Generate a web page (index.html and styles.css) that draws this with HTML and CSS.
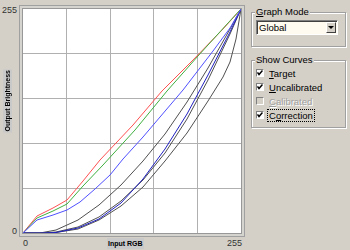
FILE: index.html
```html
<!DOCTYPE html>
<html lang="en">
  <head>
    <meta charset="UTF-8" />
    <title>Graph Mode</title>
    <link rel="stylesheet" href="styles.css">
  </head>

  <body>
    <div class="window">
      <!-- 曲线图 -->
      <div class="chart">
        <div class="y-axis">
          <span class="tick">255</span>
          <span class="axis-title vertical">Output Brightness</span>
          <span class="tick tick-zero">0</span>
        </div>
        <div class="plot-frame">
          <svg class="plot" width="218" height="224" viewBox="0 0 218 224">
            <g class="grid">
              <line x1="43.5" y1="0" x2="43.5" y2="224" />
              <line x1="87.5" y1="0" x2="87.5" y2="224" />
              <line x1="130.5" y1="0" x2="130.5" y2="224" />
              <line x1="174.5" y1="0" x2="174.5" y2="224" />
              <line x1="0" y1="44.5" x2="218" y2="44.5" />
              <line x1="0" y1="89.5" x2="218" y2="89.5" />
              <line x1="0" y1="134.5" x2="218" y2="134.5" />
              <line x1="0" y1="179.5" x2="218" y2="179.5" />
            </g>
            <!-- correction -->
            <polyline class="curve gray" points="0,224 17,224 33,221 55,211 76,196 98,176 120,152 142,125 164,93 185,59 207,20 218,0" />
            <polyline class="curve gray" points="0,224 17,224 33,223 55,218 76,208 98,192 120,171 142,144 164,110 185,71 207,25 218,0" />
            <polyline class="curve gray" points="0,224 17,224 33,223.5 55,220 76,211 98,197 120,178 142,152 164,124 185,92 200,68 207,53 213,30 218,0" />
            <polyline class="curve dark-blue" points="0,224 17,224 33,223.5 55,219 76,210 98,194 120,170 142,140 164,105 185,66 207,23 218,0" />
            <!-- target / uncalibrated -->
            <polyline class="curve red" points="0,224 14,207 30,199 44,191 60,172 77,151 110,116 139,82 170,51 200,20 218,0" />
            <polyline class="curve green" points="0,224 14,209 30,202 44,195 60,177 80,156 112,121 144,82 175,47 205,14 218,0" />
            <polyline class="curve blue" points="0,224 14,211 30,206 44,201 57,193 72,180 87,166 100,150 120,128 160,81 190,42 207,19 218,0" />
          </svg>
        </div>
        <div class="x-axis">
          <span class="tick tick-first">0</span>
          <span class="axis-title">Input RGB</span>
          <span class="tick tick-last">255</span>
        </div>
      </div>

      <!-- 右侧选项 -->
      <div class="side">
        <fieldset class="group">
          <legend><u>G</u>raph Mode</legend>
          <div class="select">
            <span class="select-text">Global</span>
            <span class="select-btn"></span>
          </div>
        </fieldset>

        <fieldset class="group curves">
          <legend>Show Curves</legend>
          <label class="check">
            <span class="box"><svg width="6" height="6" viewBox="0 0 6 6"><path d="M0.5 2.5 L2 4.5 L5.5 0.5" /></svg></span>
            <span><u>T</u>arget</span>
          </label>
          <label class="check">
            <span class="box"><svg width="6" height="6" viewBox="0 0 6 6"><path d="M0.5 2.5 L2 4.5 L5.5 0.5" /></svg></span>
            <span><u>U</u>ncalibrated</span>
          </label>
          <label class="check disabled">
            <span class="box"></span>
            <span><u>C</u>alibrated</span>
          </label>
          <label class="check">
            <span class="box"><svg width="6" height="6" viewBox="0 0 6 6"><path d="M0.5 2.5 L2 4.5 L5.5 0.5" /></svg></span>
            <span class="focus">C<u>o</u>rrection</span>
          </label>
        </fieldset>
      </div>
    </div>
  </body>
</html>
```

FILE: styles.css
```css
body {
  margin: 0;
  padding: 0;
  background: #d4d0c8;
  font-family: "Liberation Sans", Arial, sans-serif;
  font-size: 9.5px;
  color: #000;
}

.window {
  display: flex;
  width: 350px;
  height: 250px;
  overflow: hidden;
}

/* chart */
.chart {
  display: grid;
  grid-template-columns: 19px 226px;
  grid-template-rows: 232px 13px;
  padding-top: 5px;
}

.tick {
  font-size: 9px;
  line-height: 11px;
  color: #333;
}

.axis-title {
  font-size: 7px;
  font-weight: bold;
  line-height: 9px;
  white-space: nowrap;
  background: #c9c9c9;
  padding: 1px;
}

.y-axis {
  display: flex;
  flex-direction: column;
  align-items: flex-end;
  padding-right: 2px;
}

.y-axis .vertical {
  align-self: flex-start;
  margin: 53px 0 0 3px;
  padding: 1px 0;
  writing-mode: vertical-rl;
  transform: rotate(180deg);
}

.tick-zero {
  margin-top: auto;
}

.plot-frame {
  border: 1px solid #a0a0a0;
  padding: 2px;
  background: #d6d4cf;
}

.plot {
  display: block;
  border: 1px solid #989898;
  background: #fff;
}

.grid line {
  stroke: #b0b0b0;
  stroke-width: 1;
}

.curve {
  fill: none;
  stroke-width: 1;
  stroke-linejoin: round;
}

.red {
  stroke: #ff5050;
}

.green {
  stroke: #40b040;
}

.blue {
  stroke: #5050ff;
}

.dark-blue {
  stroke: #2020c0;
}

.gray {
  stroke: #505050;
}

.x-axis {
  grid-column: 2;
  grid-row: 2;
  display: flex;
  align-items: center;
  padding: 0 3px 0 4px;
}

.tick-first {
  width: 84px;
  flex-shrink: 0;
}

.tick-last {
  margin-left: auto;
}

/* side panel */
.side {
  width: 104px;
  box-sizing: border-box;
  padding: 6px 3px 0 6px;
}

.group {
  margin: 0;
  min-width: 0;
  padding: 2px 7px 11px 4px;
  border: 1px solid #a0a0a0;
  box-shadow: inset 1px 1px 0 #fff, 1px 1px 0 #fff;
}

.group legend {
  padding: 0 1px;
  margin-left: -1px;
  line-height: 12px;
  background: #d4d0c8;
}

.curves {
  margin-top: 7px;
  padding: 0 4px 5px 4px;
}

.select {
  display: flex;
  align-items: center;
  height: 15px;
  box-sizing: border-box;
  padding: 1px;
  border: 1px solid;
  border-color: #808080 #fff #fff #808080;
  box-shadow: inset 1px 1px 0 #404040;
  background: #fffbf0;
}

.select-text {
  padding-left: 1px;
  line-height: 11px;
}

.select-btn {
  display: flex;
  align-items: center;
  justify-content: center;
  margin-left: auto;
  width: 10px;
  height: 11px;
  box-sizing: border-box;
  border: 1px solid;
  border-color: #fff #404040 #404040 #fff;
  background: #d4d0c8;
}

.select-btn::after {
  content: "";
  border-left: 3px solid transparent;
  border-right: 3px solid transparent;
  border-top: 3px solid #000;
}

.check {
  display: flex;
  align-items: center;
  height: 14px;
}

.box {
  display: flex;
  align-items: center;
  justify-content: center;
  width: 8px;
  height: 8px;
  box-sizing: border-box;
  margin-right: 5px;
  border: 1px solid;
  border-color: #808080 #fff #fff #808080;
  background: #fff;
}

.box svg path {
  fill: none;
  stroke: #000;
  stroke-width: 1.5;
}

.disabled {
  color: #a0a0a0;
  text-shadow: 1px 1px 0 #fff;
}

.disabled .box {
  background: #d4d0c8;
}

.focus {
  margin-left: -1px;
  padding: 0 1px;
  line-height: 11px;
  outline: 1px dotted #000;
}
```
